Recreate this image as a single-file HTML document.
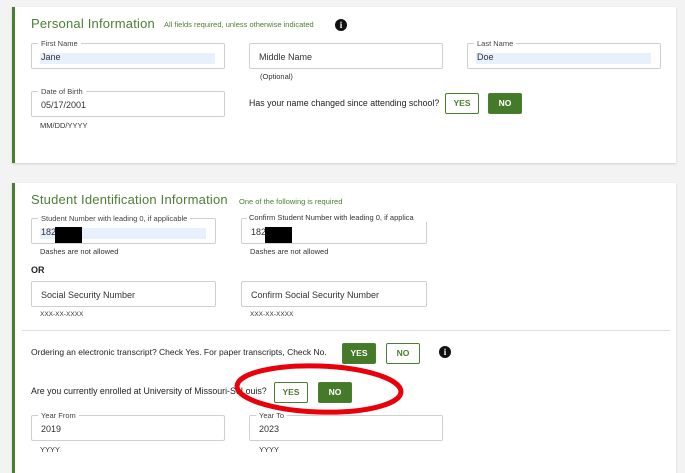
<!DOCTYPE html>
<html><head><meta charset="utf-8"><style>
*{margin:0;padding:0;box-sizing:border-box}
body{width:685px;height:453px;background:#f3f3f3;position:relative;overflow:hidden;font-family:"Liberation Sans",sans-serif;color:#222}
.a{position:absolute;white-space:nowrap}
.card{position:absolute;left:12px;right:9px;background:#fff;border-left:3px solid #4a7f2f;box-shadow:0 1px 2px rgba(0,0,0,.15)}
.t{font-size:13px;color:#4b8036;letter-spacing:.2px}
.st{font-size:7.5px;color:#4b8036}
.box{position:absolute;height:26px;border:1px solid #cfcfcf;border-radius:2px;background:#fff}
.lbl{position:absolute;top:-5px;left:6px;background:#fff;padding:0 3px;font-size:7.5px;color:#444}
.val{position:absolute;left:9px;top:8px;font-size:9px;color:#333}
.hl{position:absolute;left:8px;right:9px;top:9px;height:11px;background:#e8f0fe}
.s{font-size:7.5px;color:#333}
.q{font-size:9px;color:#222}
.btn{position:absolute;height:21px;width:34px;font-size:8.5px;font-weight:bold;text-align:center;line-height:19px;border:1px solid #4a7f2f;border-radius:2px}
.y{background:#fff;color:#4a7f2f}
.g{background:#467a2b;color:#fff}
.i{position:absolute;width:12px;height:12px;border-radius:50%;background:#111;color:#fff;font-size:9px;font-weight:bold;text-align:center;line-height:12px;font-family:"Liberation Serif",serif}
.blk{position:absolute;background:#000}
</style></head><body>
<div class="card" style="top:7px;height:156px"></div>
<div class="a t" style="left:31px;top:16px">Personal Information</div>
<div class="a st" style="left:164px;top:20px">All fields required, unless otherwise indicated</div>
<div class="i" style="left:335px;top:19px">i</div>

<div class="box" style="left:31px;top:43px;width:194px"><span class="lbl">First Name</span><div class="hl"></div><span class="val">Jane</span></div>
<div class="box" style="left:249px;top:43px;width:194px"><span class="val" style="top:8px">Middle Name</span></div>
<div class="a s" style="left:260px;top:72px">(Optional)</div>
<div class="box" style="left:467px;top:43px;width:194px"><span class="lbl">Last Name</span><div class="hl"></div><span class="val">Doe</span></div>

<div class="box" style="left:31px;top:91px;width:194px"><span class="lbl">Date of Birth</span><span class="val">05/17/2001</span></div>
<div class="a s" style="left:40px;top:121px">MM/DD/YYYY</div>
<div class="a q" style="left:249px;top:98px;font-size:8.8px">Has your name changed since attending school?</div>
<div class="btn y" style="left:445px;top:93px">YES</div>
<div class="btn g" style="left:488px;top:93px">NO</div>

<div class="card" style="top:183px;height:290px"></div>
<div class="a t" style="left:31px;top:192px">Student Identification Information</div>
<div class="a st" style="left:239px;top:197px">One of the following is required</div>

<div class="box" style="left:31px;top:218px;width:185px"><span class="lbl">Student Number with leading 0, if applicable</span><div class="hl"></div><span class="val">182</span></div>
<div class="blk" style="left:55px;top:227px;width:27px;height:16px"></div>
<div class="box" style="left:241px;top:218px;width:186px"><span class="val">182</span></div>
<div class="a s" style="left:247px;top:213px;background:#fff;padding:0 2px;width:180px;overflow:hidden">Confirm Student Number with leading 0, if applica</div>
<div class="blk" style="left:265px;top:227px;width:27px;height:16px"></div>
<div class="a s" style="left:40px;top:247px">Dashes are not allowed</div>
<div class="a s" style="left:250px;top:247px">Dashes are not allowed</div>
<div class="a" style="left:31px;top:265px;font-size:9px;font-weight:bold">OR</div>

<div class="box" style="left:31px;top:281px;width:185px"><span class="val">Social Security Number</span></div>
<div class="box" style="left:241px;top:281px;width:186px"><span class="val">Confirm Social Security Number</span></div>
<div class="a s" style="left:40px;top:311px;font-size:6.5px">XXX-XX-XXXX</div>
<div class="a s" style="left:250px;top:311px;font-size:6.5px">XXX-XX-XXXX</div>

<div class="a" style="left:22px;top:330px;width:648px;height:1px;background:#ddd"></div>
<div class="a q" style="left:31px;top:347px;font-size:8.5px">Ordering an electronic transcript? Check Yes. For paper transcripts, Check No.</div>
<div class="btn g" style="left:342px;top:343px">YES</div>
<div class="btn y" style="left:386px;top:343px">NO</div>
<div class="i" style="left:439px;top:346px">i</div>

<div class="a q" style="left:31px;top:386px;font-size:8.8px">Are you currently enrolled at University of Missouri-St Louis?</div>
<div class="btn y" style="left:274px;top:382px">YES</div>
<div class="btn g" style="left:318px;top:382px">NO</div>

<div class="box" style="left:31px;top:415px;width:194px"><span class="lbl">Year From</span><span class="val">2019</span></div>
<div class="box" style="left:249px;top:415px;width:194px"><span class="lbl">Year To</span><span class="val">2023</span></div>
<div class="a s" style="left:40px;top:445px">YYYY</div>
<div class="a s" style="left:259px;top:445px">YYYY</div>

<svg class="a" style="left:0;top:0" width="685" height="453"><ellipse cx="319" cy="389" rx="82" ry="23" fill="none" stroke="#e8000b" stroke-width="5" transform="rotate(2 319 389)"/></svg>
</body></html>
